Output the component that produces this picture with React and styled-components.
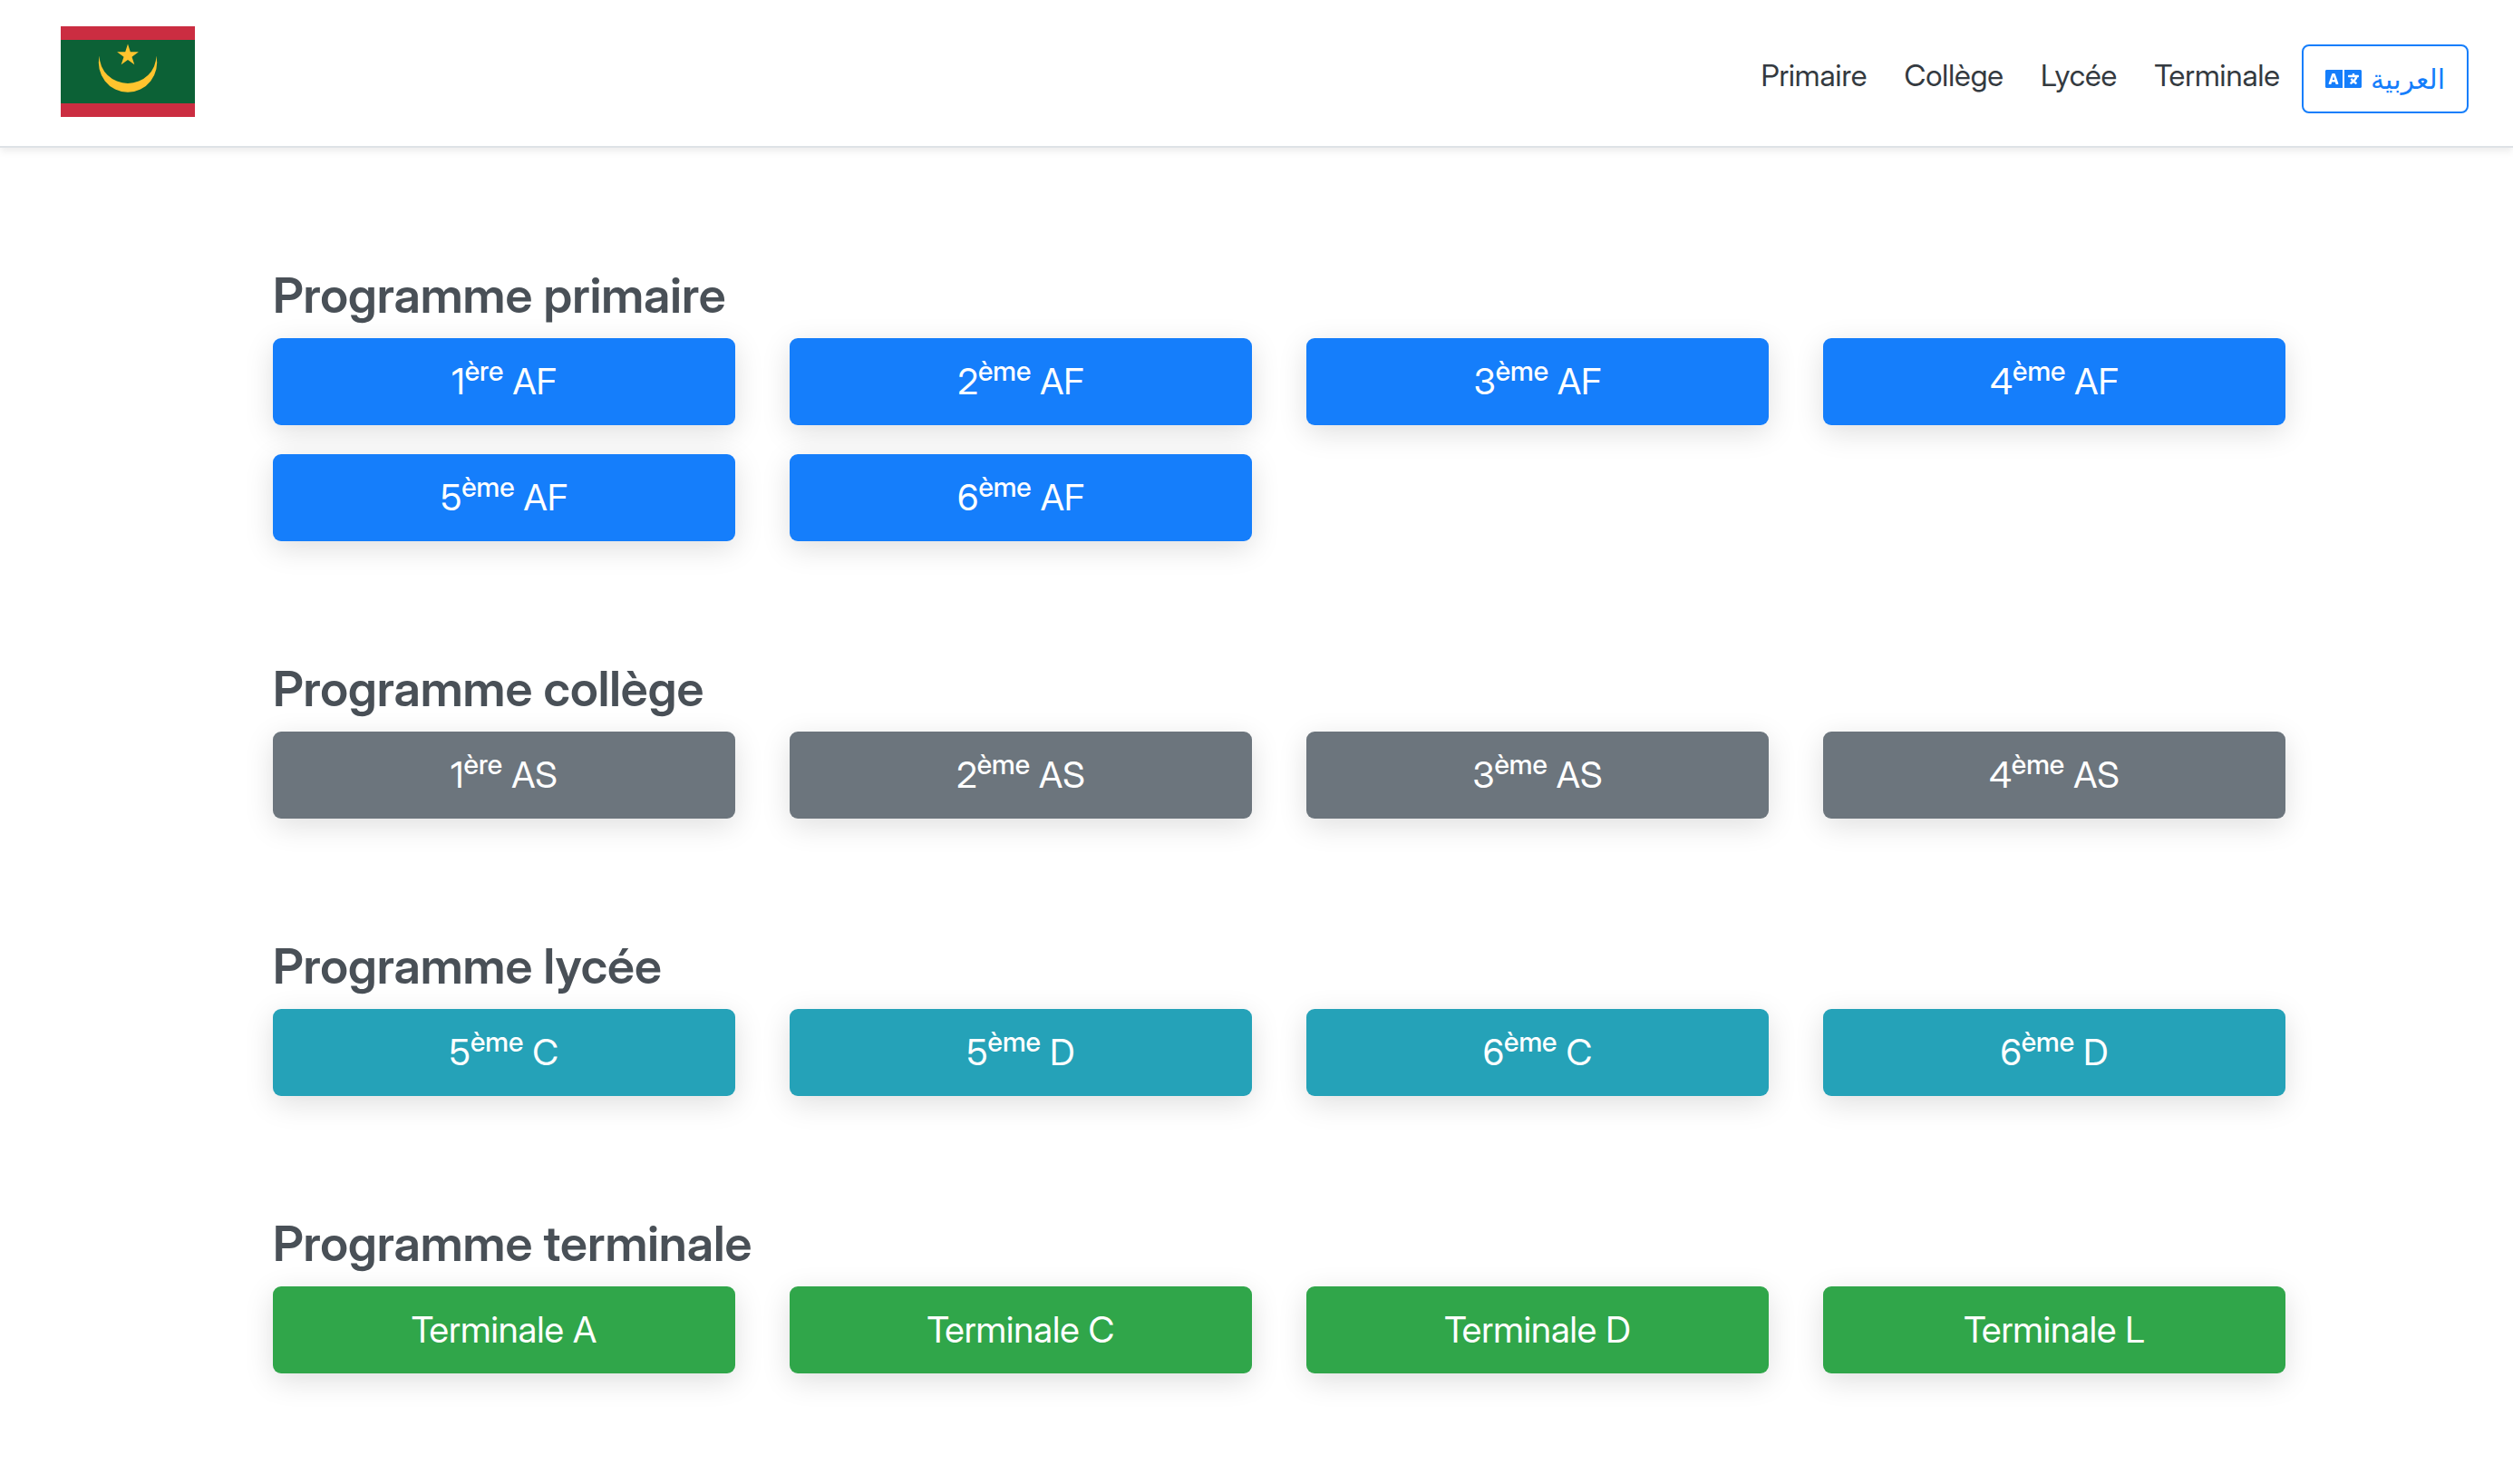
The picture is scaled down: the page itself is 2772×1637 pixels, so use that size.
import React from "react";
import styled, { createGlobalStyle } from "styled-components";
import { FaLanguage } from "react-icons/fa";

const GlobalStyle = createGlobalStyle`
  *, *::before, *::after { box-sizing: border-box; }
  body {
    margin: 0;
    background: #fff;
    color: #212529;
    font-family: "Inter Display", Inter, "Liberation Sans", sans-serif;
    line-height: 1.5;
  }
`;

const Header = styled.header`
  display: flex;
  align-items: flex-start;
  justify-content: space-between;
  padding: 29px 49px 32px 67px;
  background: #fff;
  border-bottom: 2px solid #dee2e6;
  box-shadow: 0 4px 8px rgba(0, 0, 0, 0.075);
`;

const Brand = styled.a`
  display: block;
  line-height: 0;
`;

const Nav = styled.nav`
  display: flex;
  align-items: center;
  gap: 24px;
  padding-top: 16px;
`;

const NavLinks = styled.div`
  display: flex;
  gap: 41px;
  padding-bottom: 4px;
`;

const NavLink = styled.a`
  color: #343a40;
  font-size: 33px;
  line-height: 48px;
  text-decoration: none;
`;

const LanguageButton = styled.button`
  display: flex;
  align-items: center;
  gap: 10px;
  margin-top: 4px;
  padding: 12px 24px;
  border: 2px solid #157efb;
  border-radius: 8px;
  background: transparent;
  color: #157efb;
  font-family: "Inter Display", "DejaVu Sans", sans-serif;
  font-size: 30px;
  line-height: 48px;
  cursor: pointer;
`;

const LanguageIcon = styled(FaLanguage)`
  width: 40px;
  height: 32px;
`;

const Main = styled.main`
  padding: 129px 0 120px 50px;
`;

const Container = styled.div`
  display: flex;
  flex-direction: column;
  gap: 129px;
  max-width: 2220px;
  margin: 0 auto;
`;

const Heading = styled.h2`
  margin: 0 0 14px;
  color: #495057;
  font-size: 54px;
  font-weight: 600;
  line-height: 67px;
`;

const Grid = styled.div`
  display: grid;
  grid-template-columns: repeat(4, 1fr);
  gap: 32px 60px;
`;

const LevelLink = styled.a`
  display: block;
  padding: 18px 32px;
  border-radius: 9px;
  background: ${(p) => p.$color};
  box-shadow: 0 8px 32px rgba(0, 0, 0, 0.13);
  color: #fff;
  font-size: 40px;
  line-height: 60px;
  text-align: center;
  text-decoration: none;
`;

const Ordinal = styled.sup`
  position: relative;
  top: -0.5em;
  font-size: 30px;
  font-weight: 500;
  line-height: 0;
  vertical-align: baseline;
`;

const programmes = [
  {
    id: "primaire",
    title: "Programme primaire",
    color: "#157efb",
    levels: [["1", "ère", "AF"], ["2", "ème", "AF"], ["3", "ème", "AF"], ["4", "ème", "AF"], ["5", "ème", "AF"], ["6", "ème", "AF"]],
  },
  {
    id: "college",
    title: "Programme collège",
    color: "#6c757d",
    levels: [["1", "ère", "AS"], ["2", "ème", "AS"], ["3", "ème", "AS"], ["4", "ème", "AS"]],
  },
  {
    id: "lycee",
    title: "Programme lycée",
    color: "#25a2b8",
    levels: [["5", "ème", "C"], ["5", "ème", "D"], ["6", "ème", "C"], ["6", "ème", "D"]],
  },
  {
    id: "terminale",
    title: "Programme terminale",
    color: "#30a64a",
    levels: [["Terminale", "", "A"], ["Terminale", "", "C"], ["Terminale", "", "D"], ["Terminale", "", "L"]],
  },
];

const navigation = [
  ["Primaire", "#primaire"],
  ["Collège", "#college"],
  ["Lycée", "#lycee"],
  ["Terminale", "#terminale"],
];

function Flag() {
  return (
    <svg width="148" height="100" viewBox="0 0 148 100" role="img" aria-label="Mauritanie">
      <rect width="148" height="100" fill="#cb2d41" />
      <rect y="15" width="148" height="70" fill="#0c6136" />
      <path d="M42.6 32.5A31.4 30.4 0 0 0 105.4 32.5A32.2 33 0 1 1 42.6 32.5Z" fill="#ffc42e" />
      <polygon
        points="74,19.6 76.8,28.3 85.9,28.3 78.5,33.7 81.3,42.3 74,37 66.7,42.3 69.5,33.7 62.1,28.3 71.2,28.3"
        fill="#ffc42e"
      />
    </svg>
  );
}

export default function App() {
  return (
    <>
      <GlobalStyle />
      <Header>
        <Brand href="#">
          <Flag />
        </Brand>
        <Nav>
          <NavLinks>
            {navigation.map(([label, href]) => (
              <NavLink key={href} href={href}>{label}</NavLink>
            ))}
          </NavLinks>
          <LanguageButton type="button">
            <LanguageIcon aria-hidden="true" />
            <span lang="ar">العربية</span>
          </LanguageButton>
        </Nav>
      </Header>
      <Main>
        <Container>
          {programmes.map(({ id, title, color, levels }) => (
            <section key={id} id={id}>
              <Heading>{title}</Heading>
              <Grid>
                {levels.map(([name, ordinal, track]) => (
                  <LevelLink key={name + track} href={`#${id}`} $color={color}>
                    {name}
                    {ordinal && <Ordinal>{ordinal}</Ordinal>} {track}
                  </LevelLink>
                ))}
              </Grid>
            </section>
          ))}
        </Container>
      </Main>
    </>
  );
}
